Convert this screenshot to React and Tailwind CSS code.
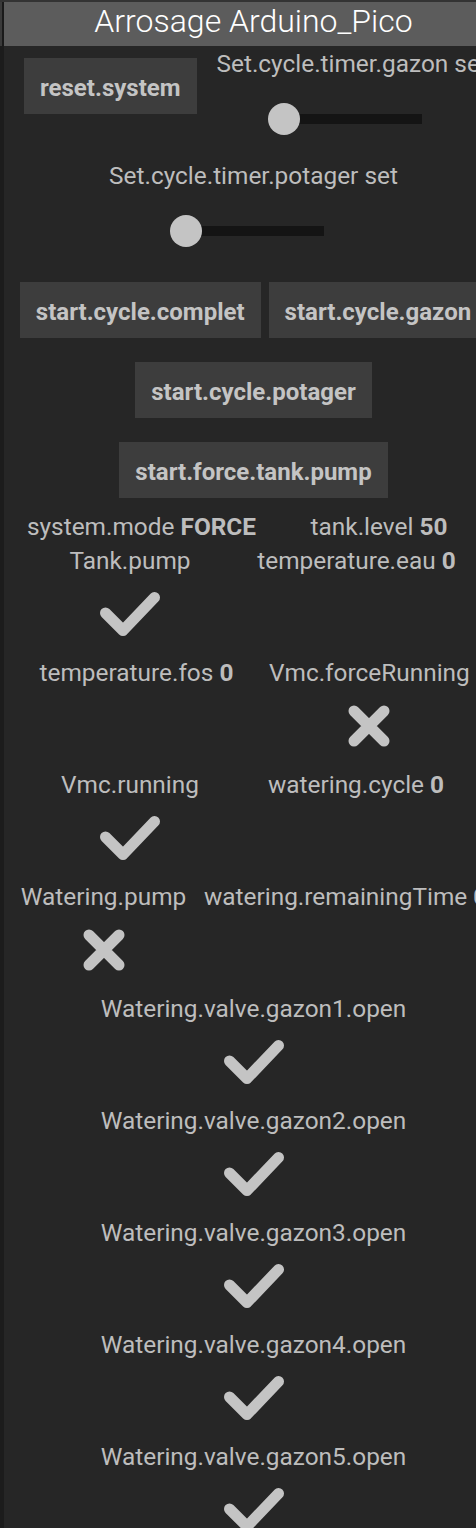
import React from 'react';

const Check = () => (
  <svg width="60" height="44" viewBox="0 0 60 44" fill="none">
    <polyline points="5.5,21 23,38.5 54.5,5.5" stroke="#c4c4c4" strokeWidth="11" strokeLinecap="round" strokeLinejoin="round" />
  </svg>
);

const Cross = () => (
  <svg width="42" height="42" viewBox="0 0 42 42" fill="none">
    <path d="M6 6L36 36M36 6L6 36" stroke="#c4c4c4" strokeWidth="11" strokeLinecap="round" />
  </svg>
);

const Button = ({ label }) => (
  <div className="h-[56px] px-4 pt-[3px] mx-1 my-3 flex items-center bg-[#3d3d3d] text-[#c4c4c4] font-bold text-[24px] whitespace-nowrap">
    {label}
  </div>
);

const Slider = () => (
  <div className="relative w-[154px] h-[32px] mr-[14px] flex items-center">
    <div className="ml-[16px] flex-1 h-[10px] bg-[#141414]" />
    <div className="absolute left-0 top-0 w-[32px] h-[32px] rounded-full bg-[#c4c4c4]" />
  </div>
);

const SliderCell = ({ label, className }) => (
  <div className={className}>
    <div className="leading-[34px] whitespace-nowrap text-[24.4px] text-[#bdbdbd]">{label}</div>
    <div className="h-[76px] flex items-center justify-center">
      <Slider />
    </div>
  </div>
);

// one entry of the status list: label, optional bold value, optional icon below
const Item = ({ label, value, icon, className }) => (
  <div className={className}>
    <div className="leading-[34px] whitespace-nowrap">
      {label}
      {value !== undefined && <span className="font-bold"> {value}</span>}
    </div>
    {icon && (
      <div className="h-[72px] mb-[6px] flex items-center justify-center">
        {icon === 'check' ? <Check /> : <Cross />}
      </div>
    )}
  </div>
);

const valves = [1, 2, 3, 4, 5];

export default function App() {
  return (
    <div className="w-[476px] h-[1528px] overflow-hidden flex bg-[#1c1c1c] font-[Roboto,sans-serif]">
      <div className="w-[4px] shrink-0 flex flex-col">
        <div className="h-[2px] bg-[#333333]" />
        <div className="h-[44px] flex">
          <div className="w-[2px] bg-[#3a3a3a]" />
          <div className="w-[2px] bg-[#1a1a1a]" />
        </div>
      </div>

      <div className="w-[499px] shrink-0 bg-[#262626]">
        <div className="h-[2px] bg-[#333333]" />
        <div className="h-[44px] bg-[#5c5c5c] text-center text-white font-light text-[32px] leading-[38px] whitespace-nowrap">
          Arrosage Arduino_Pico
        </div>

        {/* controls */}
        <div className="flex items-start pl-[16px]">
          <Button label="reset.system" />
          <SliderCell label="Set.cycle.timer.gazon set" className="pl-4 pt-[1px] pb-[1px] flex flex-col items-center" />
        </div>
        <div className="flex justify-center">
          <SliderCell label="Set.cycle.timer.potager set" className="pt-[1px] pb-[1px] flex flex-col items-center" />
        </div>
        <div className="flex justify-center">
          <Button label="start.cycle.complet" />
          <Button label="start.cycle.gazon" />
        </div>
        <div className="flex justify-center">
          <Button label="start.cycle.potager" />
        </div>
        <div className="flex justify-center">
          <Button label="start.force.tank.pump" />
        </div>

        {/* status */}
        <div className="text-[24.4px] text-[#bdbdbd]">
          <div className="flex items-start">
            <Item label="system.mode" value="FORCE" className="w-[275px] text-center" />
            <Item label="tank.level" value="50" className="w-[200px] text-center" />
          </div>
          <div className="flex items-start">
            <Item label="Tank.pump" icon="check" className="w-[252px] text-center" />
            <Item label="temperature.eau" value="0" className="w-[201px] text-center" />
          </div>
          <div className="flex items-start">
            <Item label="temperature.fos" value="0" className="w-[265px] text-center" />
            <Item label="Vmc.forceRunning" icon="cross" className="w-[199px] text-center" />
          </div>
          <div className="flex items-start">
            <Item label="Vmc.running" icon="check" className="w-[252px] text-center" />
            <Item label="watering.cycle" value="0" className="w-[200px] text-center" />
          </div>
          <div className="flex items-start">
            <Item label="Watering.pump" icon="cross" className="w-[199px] text-center" />
            <Item label="watering.remainingTime" value="0" className="pl-[1px] text-left" />
          </div>
          {valves.map((n) => (
            <Item key={n} label={`Watering.valve.gazon${n}.open`} icon="check" className="text-center" />
          ))}
        </div>
      </div>
    </div>
  );
}
